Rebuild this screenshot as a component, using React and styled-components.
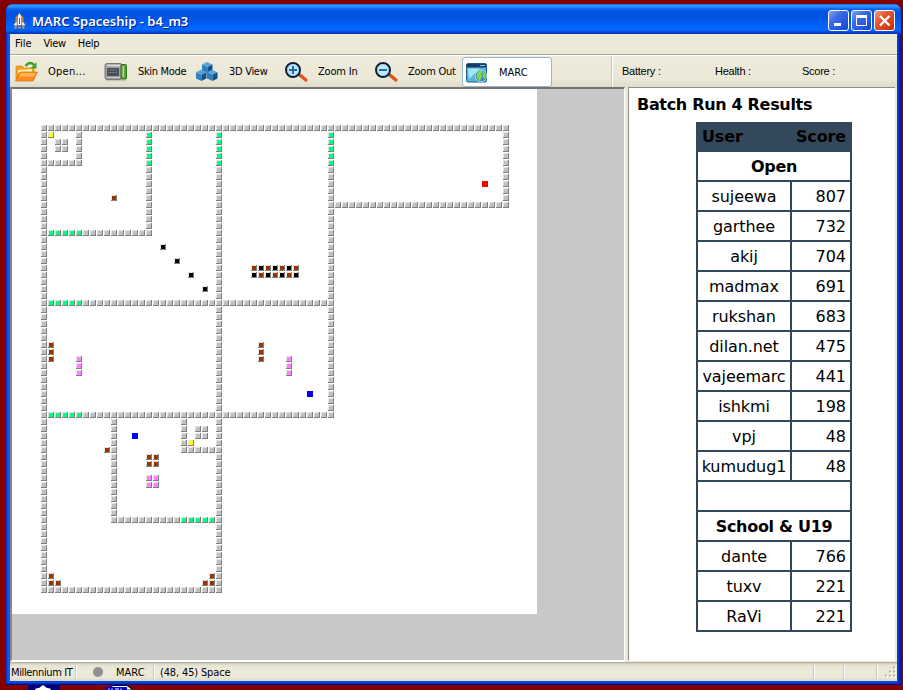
import React from "react";
import styled, { createGlobalStyle } from "styled-components";

const Global = createGlobalStyle`
  * { box-sizing: border-box; }
  html, body { margin: 0; padding: 0; overflow: hidden; }
  body { width: 903px; height: 690px; background: #840000; }
`;

const ui = `"DejaVu Sans Condensed", "DejaVu Sans", sans-serif`;

const Desktop = styled.div`
  width: 903px;
  height: 690px;
  display: flex;
  flex-direction: column;
  padding: 4px 2px 0 6px;
  background: #840000;
  font-family: ${ui};
  font-size: 11px;
  color: #000;
`;

const Window = styled.main`
  height: 681px;
  flex: none;
  display: flex;
  flex-direction: column;
  padding: 0 4px 4px;
  border-radius: 7px 7px 0 0;
  background: linear-gradient(90deg, #0019cf 0, #0a45dd 1px, #1660f0 3px, #0048dc 4px, #0048dc 891px, #003bda 892px, #001ea0 894px, #00138c 895px);
  box-shadow: inset 0 -1px #00138c, inset 0 -2px #0030c0;
`;

const TitleBar = styled.header`
  height: 30px;
  flex: none;
  display: flex;
  align-items: center;
  margin: 0 -4px;
  padding: 3px 6px 0 7px;
  border-radius: 7px 7px 0 0;
  background: linear-gradient(180deg, #0058d8 0, #3593ff 1px, #288eff 3px, #0c63ee 5px, #0053e3 8px, #0055e5 15px, #0262fa 21px, #0267ff 25px, #0060f0 27px, #0046cf 28px, #0035b8 30px);
`;

const Title = styled.h1`
  flex: 1;
  margin: 0 0 0 6px;
  color: #fff;
  font: 600 13px/20px "Noto Sans", "Open Sans", sans-serif;
  text-shadow: 1px 1px #0a1883;
  white-space: nowrap;
`;

const Caption = styled.button`
  width: 21px;
  height: 21px;
  margin-left: 2px;
  padding: 0;
  display: grid;
  place-items: center;
  border: 1px solid #fff;
  border-radius: 3px;
  background: ${(p) =>
    p.$close
      ? "linear-gradient(135deg, #f0a08a, #e25a38 35%, #d8401a 70%, #b8300c)"
      : "linear-gradient(135deg, #86a6f4, #3b6be8 35%, #2458dd 70%, #1a44c0)"};
`;

const MenuBar = styled.nav`
  height: 22px;
  flex: none;
  display: flex;
  gap: 12px;
  padding: 2px 0 0 5px;
  background: #ece9d8;
  border-bottom: 1px solid #fff;
  box-shadow: inset 0 -1px #aca899;
  line-height: 15px;
`;

const Text = styled.span`
  letter-spacing: ${(p) => p.$track || 0}px;
  white-space: nowrap;
`;

const ToolBar = styled.div`
  height: 31px;
  flex: none;
  display: flex;
  background: linear-gradient(180deg, #eeebdc, #ebe8d7 75%, #dfdbc9);
`;

const Tools = styled.div`
  width: 602px;
  display: flex;
  align-items: center;
  border-right: 1px solid #c9c6b6;
`;

const Tool = styled.button`
  width: ${(p) => p.$w}px;
  height: 30px;
  flex: none;
  display: flex;
  align-items: center;
  gap: ${(p) => p.$gap || 9}px;
  padding: ${(p) => (p.$active ? "2px 0 0 2px" : "0 0 0 4px")};
  border: ${(p) => (p.$active ? "1px solid #98b5d0" : "0")};
  border-radius: 3px;
  background: ${(p) => (p.$active ? "#fff" : "none")};
  color: #000;
  font: 11px ${ui};
`;

const Gauges = styled.div`
  flex: 1;
  display: flex;
  align-items: center;
  padding: 0 0 2px 9px;
  border-left: 1px solid #fff;
  font-family: "Liberation Sans", Arial, sans-serif;
`;

const Gauge = styled.span`
  width: ${(p) => p.$w}px;
  letter-spacing: -0.25px;
  white-space: nowrap;
`;

const Workspace = styled.section`
  height: 575px;
  flex: none;
  display: flex;
  background: #ece9d8;
`;

const MapPane = styled.div`
  width: 615px;
  height: 575px;
  border: solid;
  border-width: 2px 1px 2px 2px;
  border-color: #77756a #fff #fff #8d8a7d;
  background: #c8c8c8;
`;

const Canvas = styled.svg`
  display: block;
  background: #fff;
`;

const ResultsPane = styled.aside`
  width: 267px;
  height: 574px;
  margin-left: 3px;
  border-left: 1px solid #8f8c80;
  border-top: 1px solid #8f8c80;
  border-bottom: 1px solid #fff;
  background: #fff;
  font-family: "DejaVu Sans", Verdana, sans-serif;
`;

const Heading = styled.h2`
  margin: 6px 0 0 8px;
  font-size: 16px;
  line-height: 22px;
  letter-spacing: -0.32px;
  white-space: nowrap;
`;

const Table = styled.div`
  width: 156px;
  margin: 6px 0 0 67px;
  padding: 0 2px 2px;
  display: flex;
  flex-direction: column;
  gap: 2px;
  background: #34485c;
  font-size: 16px;
  line-height: 30px;
`;

const HeadRow = styled.div`
  height: 30px;
  margin-bottom: -2px;
  padding: 0 4px;
  display: flex;
  justify-content: space-between;
  font-weight: bold;
  letter-spacing: -0.15px;
`;

const Group = styled.div`
  height: 28px;
  background: #fff;
  font-weight: bold;
  letter-spacing: -0.3px;
  text-align: center;
`;

const Row = styled.div`
  height: 28px;
  display: grid;
  grid-template-columns: 92px 58px;
  grid-template-rows: 28px;
  gap: 2px;
`;

const Cell = styled.span`
  background: #fff;
  text-align: ${(p) => (p.$num ? "right" : "center")};
  padding-right: ${(p) => (p.$num ? 4 : 0)}px;
  letter-spacing: ${(p) => (p.$num ? 0 : -0.08)}px;
`;

const StatusBar = styled.footer`
  height: 19px;
  flex: none;
  display: flex;
  align-items: center;
  background: linear-gradient(180deg, #9d9a8c 0, #c9c6b6 1px, #e6e3d3 3px, #edeadb 8px, #ebe8d7 15px, #dcd8c4);
`;

const Status = styled.div`
  width: ${(p) => p.$w}px;
  height: 14px;
  flex: none;
  display: flex;
  align-items: center;
  gap: 12px;
  padding: 2px 0 0 ${(p) => p.$pad || 0}px;
  border-right: 1px solid #fff;
  box-shadow: inset -1px 0 #cbc7b5;
`;

const Taskbar = styled.div`
  height: 5px;
  display: flex;
  padding-left: 22px;
  gap: 45px;
`;

const WALL = "#c0c0c0";
const DOOR = "#00ff80";
const BROWN = "#993300";
const PINK = "#ff80ff";
const BLACK = "#000";
const YELLOW = "#ffff00";

/* Colour, first column, first row, last column, last row. Later runs cover earlier ones. */
const runs = [
  [WALL, 0, 0, 66, 0], [WALL, 0, 0, 0, 66], [WALL, 66, 0, 66, 11], [WALL, 41, 11, 66, 11],
  [WALL, 5, 1, 5, 5], [WALL, 0, 5, 5, 5], [WALL, 2, 2, 3, 3],
  [WALL, 15, 1, 15, 15], [WALL, 0, 15, 15, 15],
  [WALL, 25, 1, 25, 66], [WALL, 41, 1, 41, 41],
  [WALL, 0, 25, 41, 25], [WALL, 0, 41, 41, 41],
  [WALL, 10, 42, 10, 56], [WALL, 10, 56, 25, 56],
  [WALL, 20, 42, 20, 46], [WALL, 20, 46, 25, 46], [WALL, 22, 43, 23, 44],
  [WALL, 0, 66, 25, 66],
  [DOOR, 15, 1, 15, 5], [DOOR, 25, 1, 25, 5], [DOOR, 41, 1, 41, 5],
  [DOOR, 1, 15, 5, 15], [DOOR, 1, 25, 5, 25], [DOOR, 1, 41, 5, 41], [DOOR, 20, 56, 24, 56],
  [YELLOW, 1, 1, 1, 1], [YELLOW, 21, 45, 21, 45],
  [BROWN, 10, 10, 10, 10], [BROWN, 1, 31, 1, 33], [BROWN, 31, 31, 31, 33],
  [BROWN, 9, 46, 9, 46], [BROWN, 15, 47, 16, 48],
  [BROWN, 1, 64, 1, 65], [BROWN, 2, 65, 2, 65], [BROWN, 24, 64, 24, 65], [BROWN, 23, 65, 23, 65],
  [PINK, 5, 33, 5, 35], [PINK, 35, 33, 35, 35], [PINK, 15, 50, 16, 51],
  [BLACK, 17, 17, 17, 17], [BLACK, 19, 19, 19, 19], [BLACK, 21, 21, 21, 21], [BLACK, 23, 23, 23, 23],
];

const tiles = new Map();
runs.forEach(([color, c0, r0, c1, r1]) => {
  for (let c = c0; c <= c1; c++) for (let r = r0; r <= r1; r++) tiles.set(`${c},${r}`, { c, r, color });
});
for (let i = 0; i < 7; i++) {
  tiles.set(`${30 + i},20`, { c: 30 + i, r: 20, color: i % 2 ? BLACK : BROWN });
  tiles.set(`${30 + i},21`, { c: 30 + i, r: 21, color: i % 2 ? BROWN : BLACK });
}

const markers = [
  { c: 63, r: 8, color: "#ff0000" },
  { c: 38, r: 38, color: "#0000ff" },
  { c: 13, r: 44, color: "#0000ff" },
];

function ShipMap() {
  return (
    <Canvas width="525" height="525" shapeRendering="crispEdges">
      {[...tiles.values()].map(({ c, r, color }) => (
        <g key={`${c},${r}`} transform={`translate(${29 + 7 * c} ${36 + 7 * r})`}>
          <rect width="6" height="6" fill="#808080" />
          <rect width="5" height="5" fill="#e4e4e4" />
          <rect x="1" y="1" width="4" height="4" fill={color} />
        </g>
      ))}
      {markers.map(({ c, r, color }) => (
        <rect key={`${c},${r}`} x={29 + 7 * c} y={36 + 7 * r} width="6" height="6" fill={color} />
      ))}
    </Canvas>
  );
}

const RocketIcon = () => (
  <svg width="13" height="17" viewBox="0 0 13 17">
    <path d="M2.5 5L4 3.5V13H2zM9 3.5L10.5 5l.5 8H9z" fill="#e9a060" stroke="#5c4740" strokeWidth=".5" />
    <path d="M4 9L1 12v1.8h3.5zM9 9l3 3v1.8H8.5z" fill="#f4f4f4" stroke="#666" strokeWidth=".5" />
    <path d="M4.3 4L6.5.7 8.7 4v9.5H4.3z" fill="#fff" stroke="#555" strokeWidth=".6" />
    <path d="M6.5 6v6" stroke="#555" />
    <path d="M2.7 14.5v2M6.5 14.5v2M10.3 14.5v2" stroke="#ffa52c" strokeWidth="2" />
  </svg>
);

const OpenIcon = () => (
  <svg width="25" height="22" viewBox="0 0 25 22">
    <path d="M2 19V6q0-1 1-1h5l2 2h9q1 0 1 1v11z" fill="#f5a31b" stroke="#d98216" strokeWidth=".7" />
    <path d="M4 9l14-1v4H4z" fill="#fff0b2" />
    <path d="M1.5 20L6 11h17.5L19 20z" fill="#ff8a20" stroke="#e06a10" strokeWidth=".7" />
    <path d="M6.7 12h15L20 15.5H5z" fill="#ffb552" />
    <path d="M11.5 5Q16-.5 20 4" fill="none" stroke="#3d9b24" strokeWidth="2.4" />
    <path d="M22.5 1v6.5h-6z" fill="#3fa526" />
  </svg>
);

const SkinIcon = () => (
  <svg width="24" height="20" viewBox="0 0 24 20">
    <rect x="1" y="1.5" width="17" height="16" rx="2" fill="#a2a2a2" stroke="#777" />
    <path d="M3 3.5h13" stroke="#ddd" strokeWidth="1.5" />
    <rect x="3" y="6" width="12" height="8" fill="#4b4f58" />
    <path d="M4 8h9M4 10.5h9" stroke="#70747c" />
    <path d="M3 15.5h13" stroke="#c4c4c4" />
    <rect x="17" y="2.5" width="5.5" height="14.5" rx="1" fill="#5aa536" stroke="#356c1d" />
    <path d="M19.3 4v11" stroke="#b7de92" strokeWidth="1.4" />
    <path d="M2 18.7h20" stroke="#aaa69a" opacity=".6" />
  </svg>
);

const Cube = ({ x, y }) => (
  <g transform={`translate(${x} ${y})`}>
    <path d="M0 2.5L5 0l5.5 2.5L5.5 5z" fill="#5aa5d8" />
    <path d="M0 2.5L5.5 5v6.3L0 8.8z" fill="#2d7fbd" />
    <path d="M5.5 5l5-2.5v6.3l-5 2.5z" fill="#105390" />
  </g>
);

const CubesIcon = () => (
  <svg width="23" height="20" viewBox="0 0 23 20">
    <Cube x={7} y={0} />
    <Cube x={1} y={7.8} />
    <Cube x={12} y={7.8} />
  </svg>
);

const ZoomIcon = ({ plus }) => (
  <svg width="25" height="22" viewBox="0 0 25 22">
    <path d="M15 14l7.5 6" stroke="#b7aaa0" strokeWidth="3" opacity=".5" />
    <path d="M14 12.5l3 2.5" stroke="#233" strokeWidth="2.5" />
    <path d="M16.5 14.5l5.5 4.5" stroke="#e4511c" strokeWidth="3.2" strokeLinecap="round" />
    <circle cx="9" cy="9" r="7" fill="#c8e6fa" stroke="#101e35" strokeWidth="2" />
    <circle cx="9" cy="9" r="5.6" fill="none" stroke="#8cc5ed" />
    <path d={plus ? "M5 9h8M9 5v8" : "M5 9h8"} stroke="#1f6cab" strokeWidth="2" />
  </svg>
);

const MarcIcon = () => (
  <svg width="24" height="22" viewBox="0 0 24 22">
    <rect x="1.5" y="1.5" width="20" height="18.5" rx="1.5" fill="#55b8d8" stroke="#245a80" />
    <path d="M2 2h19v3.5H2z" fill="#143a68" />
    <path d="M15 3.5h5" stroke="#8fc5e5" />
    <path d="M3 6.5h12L4 17z" fill="#a5e6f2" />
    <circle cx="16" cy="14" r="5.8" fill="#3688cf" stroke="#cbe8ee" strokeWidth=".7" />
    <path d="M12 11q4-4 6-1l-2 2 1 2-2 5q-3-2-3.5-4zM18 10q3 1 2.7 4L19 17.5 17.500 14z" fill="#85d84b" />
  </svg>
);

const MinGlyph = () => (
  <svg width="17" height="17"><path d="M4 12.5h7" stroke="#fff" strokeWidth="3" /></svg>
);
const MaxGlyph = () => (
  <svg width="17" height="17"><path d="M3.500 4.5h10v9h-10z" fill="none" stroke="#fff" /><path d="M3 4.5h11" stroke="#fff" strokeWidth="3" /></svg>
);
const CloseGlyph = () => (
  <svg width="17" height="17"><path d="M4 4l9.5 9.5M13.5 4L4 13.5" stroke="#fff" strokeWidth="2.3" /></svg>
);

const Grip = () => (
  <svg width="19" height="14" viewBox="0 0 19 14">
    <path d="M15 2.5h2M11 6.5h2m2 0h2M7 10.5h2m2 0h2m2 0h2" stroke="#fff" strokeWidth="2" transform="translate(1 1)" />
    <path d="M15 2.5h2M11 6.5h2m2 0h2M7 10.5h2m2 0h2m2 0h2" stroke="#b8b4a2" strokeWidth="2" />
  </svg>
);

const open = [["sujeewa", 807], ["garthee", 732], ["akij", 704], ["madmax", 691], ["rukshan", 683], ["dilan.net", 475], ["vajeemarc", 441], ["ishkmi", 198], ["vpj", 48], ["kumudug1", 48]];
const school = [["dante", 766], ["tuxv", 221], ["RaVi", 221]];

const Rows = ({ data }) =>
  data.map(([user, score]) => (
    <Row key={user}>
      <Cell>{user}</Cell>
      <Cell $num>{score}</Cell>
    </Row>
  ));

export default function App() {
  return (
    <>
      <Global />
      <Desktop>
        <Window>
          <TitleBar>
            <RocketIcon />
            <Title>MARC Spaceship - b4_m3</Title>
            <Caption aria-label="Minimize"><MinGlyph /></Caption>
            <Caption aria-label="Maximize"><MaxGlyph /></Caption>
            <Caption $close aria-label="Close"><CloseGlyph /></Caption>
          </TitleBar>
          <MenuBar>
            <Text>File</Text>
            <Text $track={-0.3}>View</Text>
            <Text $track={-0.3}>Help</Text>
          </MenuBar>
          <ToolBar>
            <Tools>
              <Tool $w={90}><OpenIcon /><Text $track={0.25}>Open...</Text></Tool>
              <Tool $w={91} $gap={10}><SkinIcon /><Text $track={-0.33}>Skin Mode</Text></Tool>
              <Tool $w={89} $gap={11}><CubesIcon /><Text $track={-0.3}>3D View</Text></Tool>
              <Tool $w={90}><ZoomIcon plus /><Text $track={-0.2}>Zoom In</Text></Tool>
              <Tool $w={92}><ZoomIcon /><Text $track={-0.25}>Zoom Out</Text></Tool>
              <Tool $w={90} $gap={10} $active><MarcIcon /><Text>MARC</Text></Tool>
            </Tools>
            <Gauges>
              <Gauge $w={93}>Battery :</Gauge>
              <Gauge $w={87}>Health :</Gauge>
              <Gauge $w={60}>Score :</Gauge>
            </Gauges>
          </ToolBar>
          <Workspace>
            <MapPane><ShipMap /></MapPane>
            <ResultsPane>
              <Heading>Batch Run 4 Results</Heading>
              <Table>
                <HeadRow><span>User</span><span>Score</span></HeadRow>
                <Group>Open</Group>
                <Rows data={open} />
                <Group />
                <Group>School &amp; U19</Group>
                <Rows data={school} />
              </Table>
            </ResultsPane>
          </Workspace>
          <StatusBar>
            <Status $w={67} $pad={1}><Text $track={-0.36}>Millennium IT</Text></Status>
            <Status $w={78} $pad={15}>
              <svg width="12" height="12"><circle cx="6" cy="5" r="5" fill="#8f8f8f" /></svg>
              <Text>MARC</Text>
            </Status>
            <Status $w={660} $pad={5}><Text $track={-0.15}>(48, 45) Space</Text></Status>
            <Status $w={30} />
            <Status $w={33} />
            <Grip />
          </StatusBar>
        </Window>
        <Taskbar>
          <svg width="32" height="5"><path d="M0 0h32v5H0z" fill="#00007b" /><path d="M7 5q0-2 4-2l4-3 4 3q4 0 4 2z" fill="#fff" /></svg>
          <svg width="30" height="5"><path d="M7 .5h15l6 4.5H7z" fill="#fff" stroke="#000" /><path d="M0 2h22v3H0z" fill="#0000d8" /><path d="M4 5V3.500M7 5V3.500M10 4h4M16 5V3.500" stroke="#fff" /></svg>
        </Taskbar>
      </Desktop>
    </>
  );
}
